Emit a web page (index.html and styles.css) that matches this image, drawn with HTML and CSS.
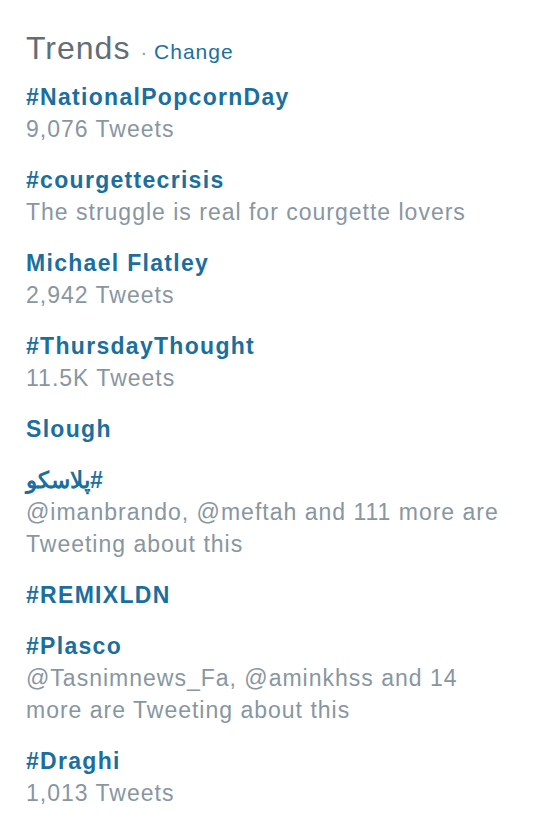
FILE: index.html
```html
<!DOCTYPE html>
<html lang="en">
<head>
    <meta charset="UTF-8">
    <meta name="viewport" content="width=device-width, initial-scale=1.0">
    <title>Trends</title>
    <link rel="stylesheet" href="styles.css">
</head>
<body>
    <div class="trends">
        <div class="trends-header">
            <h3>Trends</h3>
            <span class="dot">&middot;</span>
            <a href="#" class="change">Change</a>
        </div>
        <ul class="trend-list">
            <li class="trend">
                <a href="#" class="trend-name">#NationalPopcornDay</a>
                <div class="trend-desc">9,076 Tweets</div>
            </li>
            <li class="trend">
                <a href="#" class="trend-name">#courgettecrisis</a>
                <div class="trend-desc">The struggle is real for courgette lovers</div>
            </li>
            <li class="trend">
                <a href="#" class="trend-name">Michael Flatley</a>
                <div class="trend-desc">2,942 Tweets</div>
            </li>
            <li class="trend">
                <a href="#" class="trend-name">#ThursdayThought</a>
                <div class="trend-desc">11.5K Tweets</div>
            </li>
            <li class="trend">
                <a href="#" class="trend-name">Slough</a>
            </li>
            <li class="trend">
                <a href="#" class="trend-name" dir="rtl">#پلاسکو</a>
                <div class="trend-desc">@imanbrando, @meftah and 111 more are Tweeting about this</div>
            </li>
            <li class="trend">
                <a href="#" class="trend-name">#REMIXLDN</a>
            </li>
            <li class="trend">
                <a href="#" class="trend-name">#Plasco</a>
                <div class="trend-desc">@Tasnimnews_Fa, @aminkhss and 14 more are Tweeting about this</div>
            </li>
            <li class="trend">
                <a href="#" class="trend-name">#Draghi</a>
                <div class="trend-desc">1,013 Tweets</div>
            </li>
        </ul>
    </div>
</body>
</html>
```

FILE: styles.css
```css
body {
    margin: 0;
    background: #fff;
    font-family: "Liberation Sans", Arial, sans-serif;
}
.trends {
    width: 500px;
    padding: 28px 0 0 26px;
}
.trends-header {
    display: flex;
    align-items: baseline;
    margin-bottom: 14px;
}
.trends-header h3 {
    margin: 0;
    font-size: 32px;
    font-weight: normal;
    color: #5f6e79;
    line-height: 40px;
    letter-spacing: 1px;
}
.trends-header .dot {
    margin: 0 7px 0 10px;
    font-size: 20px;
    color: #8899a6;
}
.trends-header .change {
    font-size: 21px;
    color: #1b6fa0;
    text-decoration: none;
    letter-spacing: 1px;
}
.trend-list {
    list-style: none;
    margin: 0;
    padding: 0;
}
.trend {
    margin-bottom: 20px;
}
.trend-name {
    display: block;
    font-size: 23px;
    font-weight: bold;
    color: #1a6f9f;
    text-decoration: none;
    line-height: 31px;
    letter-spacing: 1.3px;
}
.trend-name[dir="rtl"] {
    text-align: left;
    unicode-bidi: plaintext;
    letter-spacing: 0;
}
.trend-desc {
    font-size: 23px;
    color: #8896a2;
    line-height: 32px;
    width: 490px;
    letter-spacing: 1px;
}
```
